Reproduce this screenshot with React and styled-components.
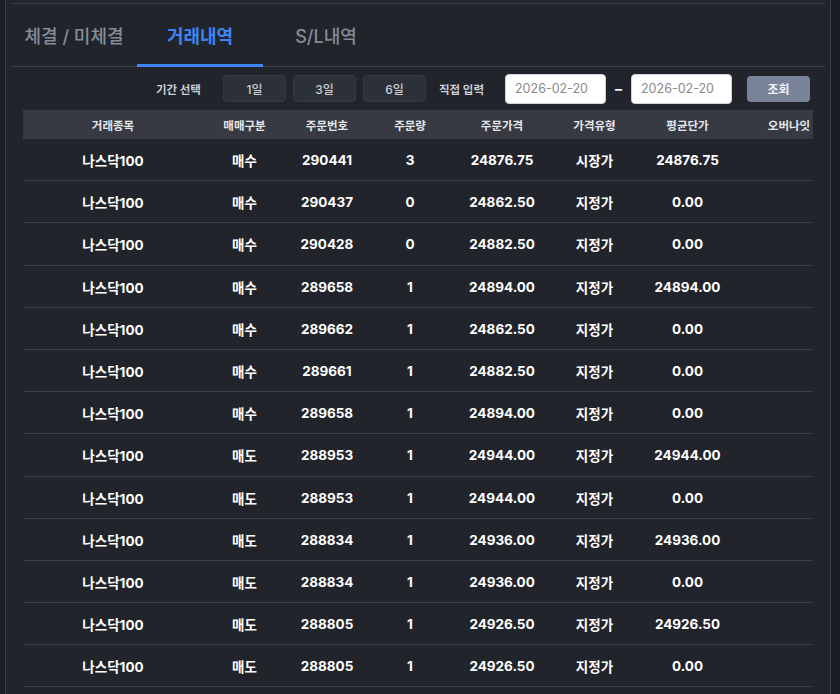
import React, { useState } from 'react';
import styled, { createGlobalStyle } from 'styled-components';

const GlobalStyle = createGlobalStyle`
  html, body {
    margin: 0;
    padding: 0;
    background: #1a1d23;
    font-family: Inter, "Noto Sans CJK KR", sans-serif;
  }
  * {
    box-sizing: border-box;
  }
`;

const Page = styled.div`
  width: 840px;
  height: 694px;
  overflow: hidden;
  padding-left: 5px;
  background: #1a1d23;
`;

const Panel = styled.div`
  width: 826px;
  height: 100%;
  background: #21242b;
  border-left: 1px solid #3b3f48;
  border-right: 1px solid #3b3f48;
  padding: 3px 5px 0;
`;

const Inner = styled.div`
  border-top: 1px solid #3b3f48;
`;

const TabBar = styled.div`
  display: flex;
  height: 63px;
  border-bottom: 1px solid #3b3f48;
`;

const Tab = styled.div`
  width: 126px;
  display: flex;
  align-items: center;
  justify-content: center;
  font-size: 18px;
  font-weight: ${({ active }) => (active ? 700 : 500)};
  color: ${({ active }) => (active ? '#3f84f3' : '#858c99')};
  border-bottom: 3px solid ${({ active }) => (active ? '#3f84f3' : 'transparent')};
  margin-bottom: -1px;
  padding-top: 2px;
  white-space: nowrap;
  cursor: pointer;
`;

const Body = styled.div`
  padding: 0 12px;
`;

const FilterRow = styled.div`
  display: flex;
  align-items: center;
  justify-content: flex-end;
  height: 43px;
  padding-right: 3px;
`;

const Label = styled.span`
  font-size: 11.5px;
  font-weight: 700;
  color: #c9cdd5;
  margin-right: ${({ gap }) => gap}px;
`;

const PeriodButton = styled.button`
  width: 63px;
  height: 27px;
  margin-right: ${({ gap }) => gap}px;
  border-radius: 4px;
  border: 1px solid #363a43;
  background: #2c3038;
  color: #c9cdd5;
  font-family: inherit;
  font-size: 12px;
  font-weight: 500;
`;

const DateInput = styled.input`
  width: 101px;
  height: 30px;
  border-radius: 4px;
  border: 1px solid #d0d3d8;
  background: #fff;
  color: #8a8a8a;
  font-family: inherit;
  font-size: 12.5px;
  padding: 0 9px;
  outline: none;
`;

const Dash = styled.span`
  width: 25px;
  text-align: center;
  color: #fff;
  font-size: 14px;
  font-weight: 700;
`;

const SearchButton = styled.button`
  width: 63px;
  height: 26px;
  margin-left: 15px;
  border: none;
  border-radius: 4px;
  background: #79839a;
  color: #f1f3f6;
  font-family: inherit;
  font-size: 12px;
  font-weight: 700;
`;

const TableWrap = styled.div`
  width: 790px;
  overflow: hidden;
`;

const columns = '180px 83px 82px 84px 100px 85px 101px 102px';

const HeadRow = styled.div`
  display: grid;
  grid-template-columns: ${columns};
  width: 817px;
  height: 29px;
  align-items: center;
  background: #373a42;
`;

const HeadCell = styled.div`
  text-align: center;
  font-size: 11.5px;
  font-weight: 700;
  color: #e4e6ea;
  white-space: nowrap;
`;

const Row = styled.div`
  display: grid;
  grid-template-columns: ${columns};
  width: 817px;
  height: 42.2px;
  padding-top: 1px;
  align-items: center;
  border-bottom: 1px solid #3b3f48;
`;

const Cell = styled.div`
  text-align: center;
  font-size: 13.5px;
  font-weight: 700;
  color: #ffffff;
  white-space: nowrap;
`;

const headers = ['거래종목', '매매구분', '주문번호', '주문량', '주문가격', '가격유형', '평균단가', '오버나잇'];

const rows = [
  ['매수', '290441', '3', '24876.75', '시장가', '24876.75'],
  ['매수', '290437', '0', '24862.50', '지정가', '0.00'],
  ['매수', '290428', '0', '24882.50', '지정가', '0.00'],
  ['매수', '289658', '1', '24894.00', '지정가', '24894.00'],
  ['매수', '289662', '1', '24862.50', '지정가', '0.00'],
  ['매수', '289661', '1', '24882.50', '지정가', '0.00'],
  ['매수', '289658', '1', '24894.00', '지정가', '0.00'],
  ['매도', '288953', '1', '24944.00', '지정가', '24944.00'],
  ['매도', '288953', '1', '24944.00', '지정가', '0.00'],
  ['매도', '288834', '1', '24936.00', '지정가', '24936.00'],
  ['매도', '288834', '1', '24936.00', '지정가', '0.00'],
  ['매도', '288805', '1', '24926.50', '지정가', '24926.50'],
  ['매도', '288805', '1', '24926.50', '지정가', '0.00'],
];

const tabs = ['체결 / 미체결', '거래내역', 'S/L내역'];

export default function App() {
  const [activeTab, setActiveTab] = useState(1);

  return (
    <Page>
      <GlobalStyle />
      <Panel>
        <Inner>
          <TabBar>
            {tabs.map((t, i) => (
              <Tab key={t} active={i === activeTab ? 1 : 0} onClick={() => setActiveTab(i)}>
                {t}
              </Tab>
            ))}
          </TabBar>
          <Body>
            <FilterRow>
              <Label gap={22}>기간 선택</Label>
              <PeriodButton gap={7}>1일</PeriodButton>
              <PeriodButton gap={7}>3일</PeriodButton>
              <PeriodButton gap={13}>6일</PeriodButton>
              <Label gap={21}>직접 입력</Label>
              <DateInput defaultValue="2026-02-20" />
              <Dash>–</Dash>
              <DateInput defaultValue="2026-02-20" />
              <SearchButton>조회</SearchButton>
            </FilterRow>
            <TableWrap>
              <HeadRow>
                {headers.map((h) => (
                  <HeadCell key={h}>{h}</HeadCell>
                ))}
              </HeadRow>
              {rows.map((r, i) => (
                <Row key={i}>
                  <Cell>나스닥100</Cell>
                  {r.map((c, j) => (
                    <Cell key={j}>{c}</Cell>
                  ))}
                  <Cell />
                </Row>
              ))}
            </TableWrap>
          </Body>
        </Inner>
      </Panel>
    </Page>
  );
}
